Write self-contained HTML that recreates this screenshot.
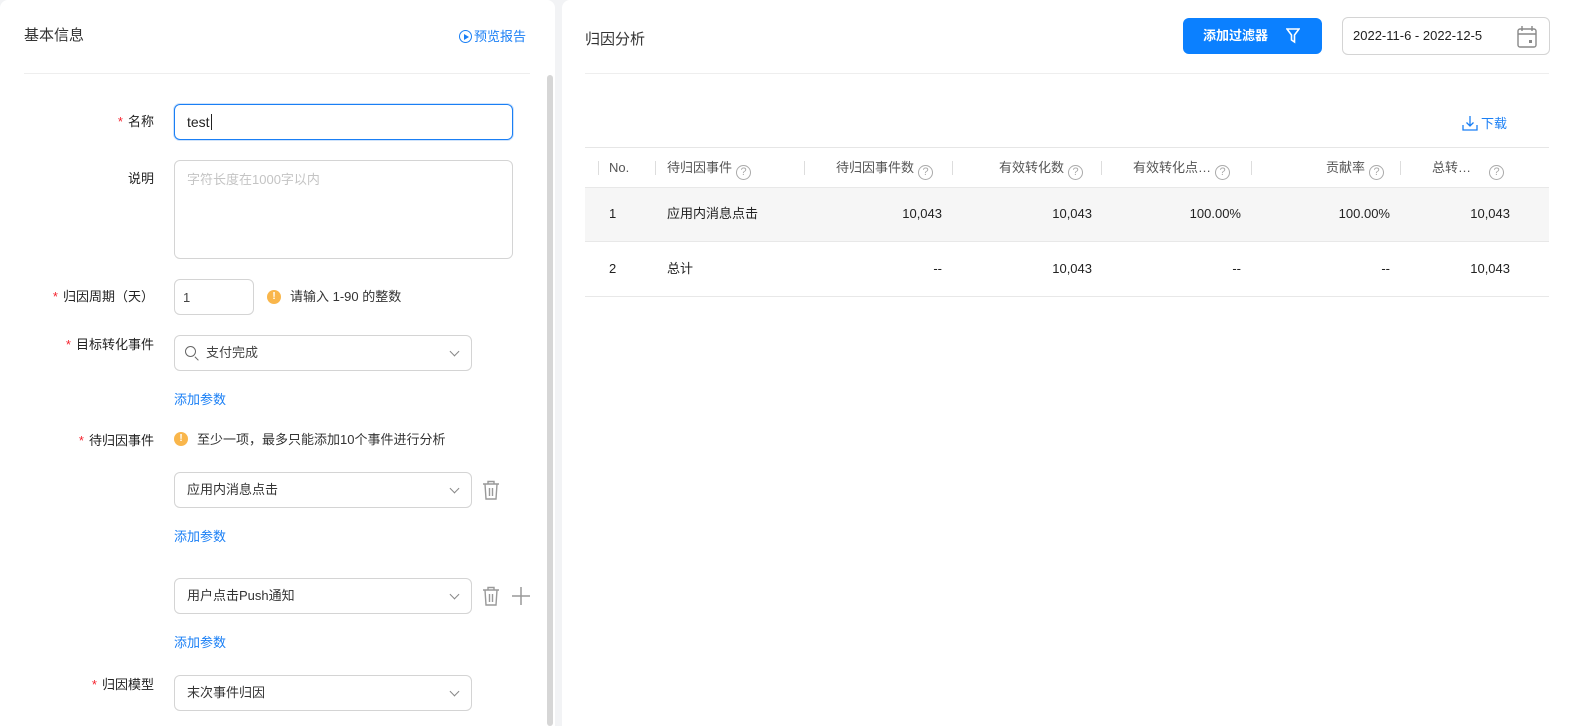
<!DOCTYPE html>
<html><head><meta charset="utf-8"><style>
*{box-sizing:border-box;margin:0;padding:0}
body{width:1579px;height:726px;background:#f2f3f5;font-family:"Liberation Sans","Noto Sans CJK SC",sans-serif;font-size:13px;line-height:18px;color:#222;position:relative;overflow:hidden}
.a{position:absolute;white-space:nowrap;line-height:18px}
.card{position:absolute;background:#fff;top:0;height:726px;border-radius:8px 8px 0 0}
.lbl{position:absolute;left:0;width:154px;text-align:right;font-size:13px;line-height:18px;color:#222;white-space:nowrap}
.lbl b{color:#f5222d;font-weight:normal;margin-right:5px}
.box{position:absolute;border:1px solid #d4d4d4;border-radius:6px;background:#fff}
.link{color:#1a7ff5}
.chev{position:absolute;right:13px;top:12px;width:7px;height:7px;border-right:1.3px solid #888;border-bottom:1.3px solid #888;transform:rotate(45deg)}
.q{display:inline-block;width:15px;height:15px;border:1.3px solid #aaa;border-radius:50%;color:#aaa;font-size:11px;line-height:13px;text-align:center;vertical-align:-3px;margin-left:4px}
.sep{position:absolute;width:1px;height:14px;background:#ddd;top:161px}
.c{position:absolute;text-align:right;color:#222;line-height:18px}
.h{position:absolute;color:#555;top:159px;line-height:18px;white-space:nowrap}
.warn{position:absolute;width:14px;height:14px;border-radius:50%;background:#f9b64b;color:#fff;font-size:10px;font-weight:bold;text-align:center;line-height:14px}
</style></head><body>
<div class="card" style="left:0;width:555px">
  <div class="a" style="left:24px;top:27px;font-size:15px;color:#333">基本信息</div>
  <div class="a link" style="left:459px;top:28px;font-size:13px"><span style="display:inline-block;width:13px;height:13px;border:1.3px solid #1a7ff5;border-radius:50%;vertical-align:-2px;position:relative;margin-right:2px"><span style="position:absolute;left:3.5px;top:2.5px;border-left:5px solid #1a7ff5;border-top:3px solid transparent;border-bottom:3px solid transparent"></span></span>预览报告</div>
  <div class="a" style="left:24px;top:73px;width:506px;height:1px;background:#eee"></div>
  <div class="a" style="left:547px;top:75px;width:6px;height:651px;background:#d6d6d6;border-radius:3px"></div>

  <div class="lbl" style="top:113px"><b>*</b>名称</div>
  <div class="box" style="left:174px;top:104px;width:339px;height:36px;border-color:#1a7ff5;box-shadow:0 0 0 1px #cfe3fb"><span class="a" style="left:12px;top:8px;font-size:14px">test<span style="border-left:1px solid #222;margin-left:1px"></span></span></div>

  <div class="lbl" style="top:170px">说明</div>
  <div class="box" style="left:174px;top:160px;width:339px;height:99px"><span class="a" style="left:12px;top:10px;color:#c4c4c4">字符长度在1000字以内</span></div>

  <div class="lbl" style="top:288px"><b>*</b>归因周期（天）</div>
  <div class="box" style="left:174px;top:279px;width:80px;height:36px"><span class="a" style="left:8px;top:9px;color:#444">1</span></div>
  <div class="warn" style="left:267px;top:290px">!</div>
  <div class="a" style="left:290px;top:288px;color:#333">请输入 1-90 的整数</div>

  <div class="lbl" style="top:336px"><b>*</b>目标转化事件</div>
  <div class="box" style="left:174px;top:335px;width:298px;height:36px">
    <span class="a" style="left:10px;top:10px;width:11px;height:11px;border:1.4px solid #666;border-radius:50%"></span>
    <span class="a" style="left:19px;top:22px;width:5px;height:1.4px;background:#666;transform:rotate(45deg)"></span>
    <span class="a" style="left:31px;top:8px;color:#444">支付完成</span><div class="chev"></div></div>
  <div class="a link" style="left:174px;top:391px">添加参数</div>

  <div class="lbl" style="top:432px"><b>*</b>待归因事件</div>
  <div class="warn" style="left:174px;top:432px">!</div>
  <div class="a" style="left:197px;top:431px;color:#333">至少一项，最多只能添加10个事件进行分析</div>

  <div class="box" style="left:174px;top:472px;width:298px;height:36px"><span class="a" style="left:12px;top:8px;color:#333">应用内消息点击</span><div class="chev"></div></div>
  <svg class="a" style="left:482px;top:480px" width="18" height="20" viewBox="0 0 18 20" fill="none" stroke="#999" stroke-width="1.4"><path d="M1 4h16M6 4V1.5h6V4M3 4l1 15h10l1-15M7.5 8v8M10.5 8v8"/></svg>
  <div class="a link" style="left:174px;top:528px">添加参数</div>

  <div class="box" style="left:174px;top:578px;width:298px;height:36px"><span class="a" style="left:12px;top:8px;color:#333">用户点击Push通知</span><div class="chev"></div></div>
  <svg class="a" style="left:482px;top:586px" width="18" height="20" viewBox="0 0 18 20" fill="none" stroke="#999" stroke-width="1.4"><path d="M1 4h16M6 4V1.5h6V4M3 4l1 15h10l1-15M7.5 8v8M10.5 8v8"/></svg>
  <svg class="a" style="left:511px;top:586px" width="20" height="20" viewBox="0 0 20 20" stroke="#999" stroke-width="1.5"><path d="M10 1v18M1 10h18"/></svg>
  <div class="a link" style="left:174px;top:634px">添加参数</div>

  <div class="lbl" style="top:676px"><b>*</b>归因模型</div>
  <div class="box" style="left:174px;top:675px;width:298px;height:36px"><span class="a" style="left:12px;top:8px;color:#333">末次事件归因</span><div class="chev"></div></div>
</div>

<div class="card" style="left:562px;width:1017px;border-radius:8px 0 0 0">
</div>
<div class="a" style="left:585px;top:30px;font-size:15px;color:#333;line-height:20px">归因分析</div>
<div class="a" style="left:1183px;top:18px;width:139px;height:36px;background:#0b80ff;border-radius:6px;color:#fff;font-weight:bold;font-size:13px;padding:9px 0 0 20px">添加过滤器
<svg style="position:absolute;left:103px;top:10px" width="14" height="16" viewBox="0 0 14 16" fill="none" stroke="#fff" stroke-width="1.6"><path d="M1 1h12L8.5 7v7L5.5 12V7z"/></svg></div>
<div class="a" style="left:1342px;top:17px;width:208px;height:38px;border:1px solid #d4d4d4;border-radius:6px;background:#fff">
  <span class="a" style="left:10px;top:9px;color:#222">2022-11-6 - 2022-12-5</span>
  <svg class="a" style="left:173px;top:7px" width="22" height="24" viewBox="0 0 22 24" fill="none" stroke="#888" stroke-width="1.4"><rect x="2" y="4" width="18" height="18" rx="2"/><path d="M2 9h18M6 1v5M16 1v5"/><rect x="13" y="15" width="3" height="3" fill="#888" stroke="none"/></svg>
</div>
<div class="a" style="left:585px;top:73px;width:964px;height:1px;background:#eee"></div>

<div class="a link" style="left:1462px;top:115px"><svg style="vertical-align:-3px;margin-right:3px" width="16" height="16" viewBox="0 0 16 16" fill="none" stroke="#1a7ff5" stroke-width="1.3"><path d="M8 1v10M4.5 7.5L8 11l3.5-3.5M1 10v5h14v-5"/></svg>下载</div>

<div class="a" style="left:585px;top:147px;width:964px;height:1px;background:#e6e6e6"></div>
<div class="a" style="left:585px;top:187px;width:964px;height:55px;background:#f6f6f6;border-top:1px solid #e8e8e8;border-bottom:1px solid #e8e8e8"></div>
<div class="a" style="left:585px;top:296px;width:964px;height:1px;background:#e8e8e8"></div>

<div class="sep" style="left:598px"></div>
<div class="h" style="left:609px">No.</div>
<div class="sep" style="left:655px"></div>
<div class="h" style="left:667px">待归因事件<span class="q">?</span></div>
<div class="sep" style="left:804px"></div>
<div class="h" style="left:836px">待归因事件数<span class="q">?</span></div>
<div class="sep" style="left:952px"></div>
<div class="h" style="left:999px">有效转化数<span class="q">?</span></div>
<div class="sep" style="left:1101px"></div>
<div class="h" style="left:1133px">有效转化点…<span class="q">?</span></div>
<div class="sep" style="left:1251px"></div>
<div class="h" style="left:1326px">贡献率<span class="q">?</span></div>
<div class="sep" style="left:1400px"></div>
<div class="h" style="left:1432px">总转…<span class="q" style="margin-left:18px">?</span></div>

<div class="a" style="left:609px;top:205px">1</div>
<div class="a" style="left:667px;top:205px">应用内消息点击</div>
<div class="c" style="left:842px;width:100px;top:205px">10,043</div>
<div class="c" style="left:992px;width:100px;top:205px">10,043</div>
<div class="c" style="left:1141px;width:100px;top:205px">100.00%</div>
<div class="c" style="left:1290px;width:100px;top:205px">100.00%</div>
<div class="c" style="left:1410px;width:100px;top:205px">10,043</div>

<div class="a" style="left:609px;top:260px">2</div>
<div class="a" style="left:667px;top:260px">总计</div>
<div class="c" style="left:842px;width:100px;top:260px">--</div>
<div class="c" style="left:992px;width:100px;top:260px">10,043</div>
<div class="c" style="left:1141px;width:100px;top:260px">--</div>
<div class="c" style="left:1290px;width:100px;top:260px">--</div>
<div class="c" style="left:1410px;width:100px;top:260px">10,043</div>
</body></html>
